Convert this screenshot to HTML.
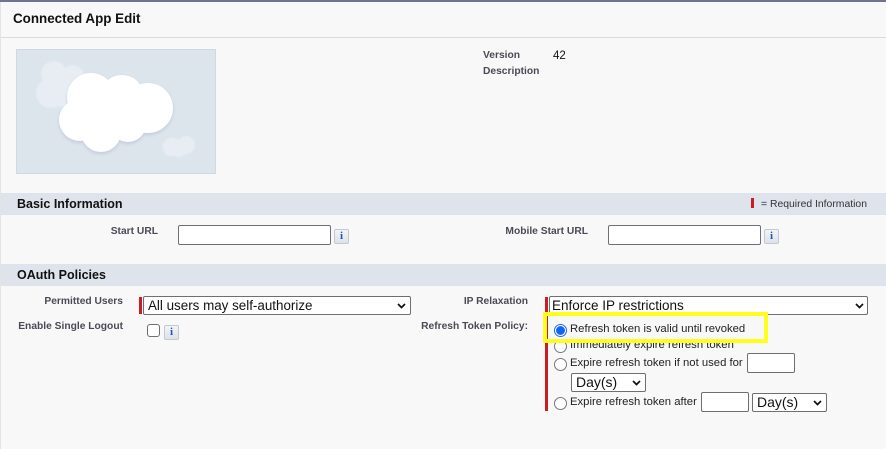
<!DOCTYPE html>
<html><head><meta charset="utf-8">
<style>
html,body{margin:0;padding:0;width:886px;height:449px;overflow:hidden;background:#fff}
body{position:relative;font-family:"Liberation Sans",sans-serif;color:#000}
.a{position:absolute;white-space:nowrap}
.lbl{font-size:10.25px;font-weight:bold;color:#4a4a56;line-height:12px}
.lblr{font-size:10.25px;font-weight:bold;color:#4a4a56;line-height:12px;text-align:right}
.band{position:absolute;left:1px;width:885px;height:22px;background:#dfe3ec}
.h{position:absolute;left:17px;font-size:12.5px;font-weight:bold;line-height:14px;color:#111}
.inp{position:absolute;background:#fff;border:1px solid #6f6f73;border-radius:2px;box-sizing:border-box}
.info{position:absolute;width:15px;height:15px;box-sizing:border-box;background:linear-gradient(#f2f4f7,#dde2e9);border:1px solid #c3c9d2;border-radius:2px;color:#1f55b5;font:bold 11px/13px "Liberation Serif",serif;text-align:center}
.sel{position:absolute;box-sizing:border-box;background:#fff;border:1px solid #6f6f73;border-radius:2px;font-size:13.4px;line-height:17px;color:#111;padding-left:4px}
.sel svg{position:absolute;top:50%;margin-top:-3px}
.req{position:absolute;background:#cc1c22;width:3px}
.radio{position:absolute;width:13px;height:13px;box-sizing:border-box;border:1px solid #77777b;border-radius:50%;background:#fff}
.t{position:absolute;font-size:11.3px;line-height:13px;color:#222;white-space:nowrap}
</style></head><body>
<div class="a" style="left:0;top:0;width:886px;height:449px;background:#f8f8f8"></div>
<div class="a" style="left:0;top:0;width:1px;height:449px;background:#e4e4e4"></div>
<div class="a" style="left:0;top:0;width:886px;height:2px;background:#6d7493"></div>
<div class="a" style="left:1px;top:37px;width:885px;height:1px;background:#dcdcdc"></div>
<div class="a" style="left:13px;top:11px;font-size:13.4px;font-weight:bold;line-height:16px;color:#111">Connected App Edit</div>

<svg class="a" style="left:16px;top:49px" width="200" height="125" viewBox="16 49 200 125">
<defs>
<filter id="b" x="-20%" y="-20%" width="140%" height="140%"><feGaussianBlur stdDeviation="1.6"/></filter>
<filter id="c" x="-20%" y="-20%" width="140%" height="140%"><feGaussianBlur stdDeviation=".7"/></filter>
</defs>
<rect x="16.5" y="49.5" width="199" height="124" fill="#dce4ec" stroke="#cfd9e2"/>
<g fill="#e7edf3" filter="url(#c)">
<circle cx="54" cy="74" r="13"/><circle cx="73" cy="76" r="11"/><circle cx="51" cy="93" r="15"/><circle cx="64" cy="92" r="15"/>
<circle cx="172" cy="147" r="9.5"/><circle cx="186" cy="145" r="9"/><circle cx="179" cy="148" r="9"/>
</g>
<g fill="#b9c5d1" filter="url(#b)" opacity=".7" transform="translate(0,2)">
<circle cx="91" cy="97" r="24"/><circle cx="122" cy="97" r="22"/><circle cx="148" cy="108" r="25"/><circle cx="80" cy="120" r="21"/><circle cx="101" cy="132" r="20"/><circle cx="128" cy="124" r="18"/>
</g>
<g fill="#fff">
<circle cx="91" cy="97" r="24"/><circle cx="122" cy="97" r="22"/><circle cx="148" cy="108" r="25"/><circle cx="80" cy="120" r="21"/><circle cx="101" cy="132" r="20"/><circle cx="128" cy="124" r="18"/>
<rect x="85" y="95" width="60" height="38"/>
</g>
</svg>

<div class="a lbl" style="left:483px;top:50px">Version</div>
<div class="a lbl" style="left:483px;top:66px">Description</div>
<div class="a" style="left:553px;top:49px;font-size:11.5px;line-height:14px;color:#111">42</div>

<div class="band" style="top:193px"></div>
<div class="h" style="top:197px">Basic Information</div>
<div class="req" style="left:751px;top:198px;height:10px"></div>
<div class="a" style="left:761px;top:198px;font-size:10.4px;line-height:13px;color:#333">= Required Information</div>

<div class="a lblr" style="left:60px;width:98px;top:226px">Start URL</div>
<div class="inp" style="left:178px;top:225px;width:153px;height:20px"></div>
<div class="info" style="left:334px;top:229px">i</div>
<div class="a lblr" style="left:480px;width:108px;top:226px">Mobile Start URL</div>
<div class="inp" style="left:608px;top:225px;width:153px;height:20px"></div>
<div class="info" style="left:764px;top:229px">i</div>

<div class="band" style="top:264px"></div>
<div class="h" style="top:268px">OAuth Policies</div>

<div class="a lblr" style="left:20px;width:103px;top:296px">Permitted Users</div>
<div class="req" style="left:139px;top:297px;height:17px"></div>
<div class="sel" style="left:143px;top:296px;width:268px;height:19px">All users may self-authorize<svg style="right:4px" width="9" height="6" viewBox="0 0 9 6"><path d="M1 1l3.5 3.5L8 1" fill="none" stroke="#111" stroke-width="1.7"/></svg></div>
<div class="a lblr" style="left:10px;width:113px;top:321px">Enable Single Logout</div>
<div class="inp" style="left:147px;top:324px;width:13px;height:13px;border-radius:3px"></div>
<div class="info" style="left:164px;top:325px">i</div>

<div class="a lblr" style="left:420px;width:108px;top:296px">IP Relaxation</div>
<div class="req" style="left:545px;top:297px;height:114px"></div>
<div class="sel" style="left:549px;top:296px;width:319px;height:19px;padding-left:2px;font-size:13.5px">Enforce IP restrictions<svg style="right:3px" width="9" height="6" viewBox="0 0 9 6"><path d="M1 1l3.5 3.5L8 1" fill="none" stroke="#111" stroke-width="1.7"/></svg></div>
<div class="a lblr" style="left:400px;width:128px;top:321px">Refresh Token Policy:</div>

<div class="radio" style="left:554px;top:340px"></div>
<div class="t" style="left:570px;top:339px">Immediately expire refresh token</div>

<div class="a" style="left:543px;top:312px;width:225px;height:31px;box-sizing:border-box;border:4px solid #ffff1e"></div>
<div class="req" style="left:547px;top:316px;height:23px;width:1px"></div>
<div class="a" style="left:554px;top:324px;width:13px;height:13px;box-sizing:border-box;border-radius:50%;border:2px solid #fff;background:#0f62fe;box-shadow:0 0 0 1px #1a6cf0 inset"></div>
<div class="a" style="left:554px;top:324px;width:13px;height:13px;box-sizing:border-box;border-radius:50%;border:1px solid #1a6cf0"></div>
<div class="t" style="left:570px;top:323px">Refresh token is valid until revoked</div>

<div class="radio" style="left:554px;top:358px"></div>
<div class="t" style="left:570px;top:357px">Expire refresh token if not used for</div>
<div class="inp" style="left:747px;top:353px;width:48px;height:20px"></div>
<div class="sel" style="left:571px;top:373px;width:75px;height:19px;font-size:14px">Day(s)<svg style="right:4px" width="9" height="6" viewBox="0 0 9 6"><path d="M1 1l3.5 3.5L8 1" fill="none" stroke="#111" stroke-width="1.7"/></svg></div>
<div class="radio" style="left:554px;top:397px"></div>
<div class="t" style="left:570px;top:396px">Expire refresh token after</div>
<div class="inp" style="left:701px;top:392px;width:48px;height:20px"></div>
<div class="sel" style="left:752px;top:393px;width:75px;height:19px;font-size:14px">Day(s)<svg style="right:4px" width="9" height="6" viewBox="0 0 9 6"><path d="M1 1l3.5 3.5L8 1" fill="none" stroke="#111" stroke-width="1.7"/></svg></div>
</body></html>
